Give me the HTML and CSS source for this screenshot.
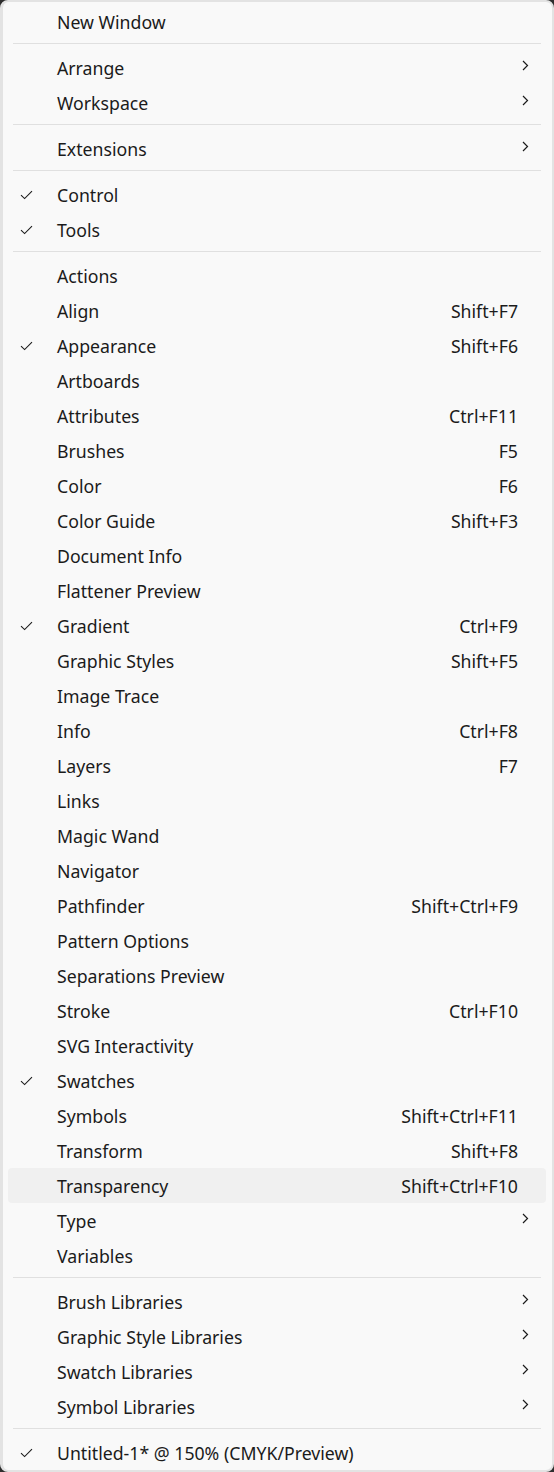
FILE: index.html
```html
<!DOCTYPE html>
<html lang="en">
<head>
    <meta charset="UTF-8">
    <meta name="viewport" content="width=device-width, initial-scale=1.0">
    <title>Window Menu</title>
    <link rel="stylesheet" href="styles.css">
</head>
<body>
    <div class="menu">
        <div class="item"><span class="check"></span><span class="label">New Window</span></div>
        <div class="sep"></div>
        <div class="item sub"><span class="check"></span><span class="label">Arrange</span></div>
        <div class="item sub"><span class="check"></span><span class="label">Workspace</span></div>
        <div class="sep"></div>
        <div class="item sub"><span class="check"></span><span class="label">Extensions</span></div>
        <div class="sep"></div>
        <div class="item on"><span class="check"></span><span class="label">Control</span></div>
        <div class="item on"><span class="check"></span><span class="label">Tools</span></div>
        <div class="sep"></div>
        <div id="panels"></div>
        <div class="sep"></div>
        <div class="item sub"><span class="check"></span><span class="label">Brush Libraries</span></div>
        <div class="item sub"><span class="check"></span><span class="label">Graphic Style Libraries</span></div>
        <div class="item sub"><span class="check"></span><span class="label">Swatch Libraries</span></div>
        <div class="item sub"><span class="check"></span><span class="label">Symbol Libraries</span></div>
        <div class="sep"></div>
        <div class="item on"><span class="check"></span><span class="label">Untitled-1* @ 150% (CMYK/Preview)</span></div>
    </div>

    <script>
        const panels = [
            ['Actions'], ['Align', 'Shift+F7'], ['Appearance', 'Shift+F6', 'on'], ['Artboards'],
            ['Attributes', 'Ctrl+F11'], ['Brushes', 'F5'], ['Color', 'F6'], ['Color Guide', 'Shift+F3'],
            ['Document Info'], ['Flattener Preview'], ['Gradient', 'Ctrl+F9', 'on'],
            ['Graphic Styles', 'Shift+F5'], ['Image Trace'], ['Info', 'Ctrl+F8'], ['Layers', 'F7'],
            ['Links'], ['Magic Wand'], ['Navigator'], ['Pathfinder', 'Shift+Ctrl+F9'],
            ['Pattern Options'], ['Separations Preview'], ['Stroke', 'Ctrl+F10'],
            ['SVG Interactivity'], ['Swatches', '', 'on'], ['Symbols', 'Shift+Ctrl+F11'],
            ['Transform', 'Shift+F8'], ['Transparency', 'Shift+Ctrl+F10', 'hover'],
            ['Type', '', 'sub'], ['Variables']
        ];

        const holder = document.getElementById('panels');
        panels.forEach(([name, key, flag]) => {
            const row = document.createElement('div');
            row.className = 'item' + (flag ? ' ' + flag : '');
            row.innerHTML = `<span class="check"></span><span class="label">${name}</span>` +
                (key ? `<span class="key">${key}</span>` : '');
            holder.appendChild(row);
        });

        // tick marks and submenu chevrons
        document.querySelectorAll('.item.on .check').forEach(el => {
            el.innerHTML = '<svg width="13" height="10" viewBox="0 0 13 10"><path d="M1 5.2 L4.6 8.6 L12 1.2" fill="none" stroke="#1b1b1b" stroke-width="1.1"/></svg>';
        });
        document.querySelectorAll('.item.sub').forEach(el => {
            el.insertAdjacentHTML('beforeend', '<span class="arrow"><svg width="7" height="11" viewBox="0 0 7 11"><path d="M1 1 L5.5 5.5 L1 10" fill="none" stroke="#1b1b1b" stroke-width="1.2"/></svg></span>');
        });
    </script>
</body>
</html>
```

FILE: styles.css
```css
body {
    margin: 0;
    background: #2e2e2e;
    font-family: "Noto Sans", "Open Sans", sans-serif;
}
.menu {
    box-sizing: border-box;
    height: 1472px;
    background: #f9f9f9;
    border: 2px solid #e3e3e3;
    border-left-width: 3px;
    border-radius: 8px;
    padding-top: 2px;
    color: #1b1b1b;
    font-size: 17.7px;
}
.item {
    display: flex;
    align-items: center;
    height: 35px;
    margin: 0 6px 0 5px;
    border-radius: 4px;
}
.item.hover {
    background: #f0f0f0;
}
.check {
    width: 13px;
    margin-left: 12px;
    display: flex;
}
.label {
    flex: 1;
    margin-left: 24px;
    white-space: nowrap;
}
.key {
    margin-right: 28px;
}
.arrow {
    display: flex;
    margin-right: 17px;
    margin-top: -5px;
}
.sep {
    height: 1px;
    background: #e0e0e0;
    margin: 4px 11px 6px 10px;
}
```
